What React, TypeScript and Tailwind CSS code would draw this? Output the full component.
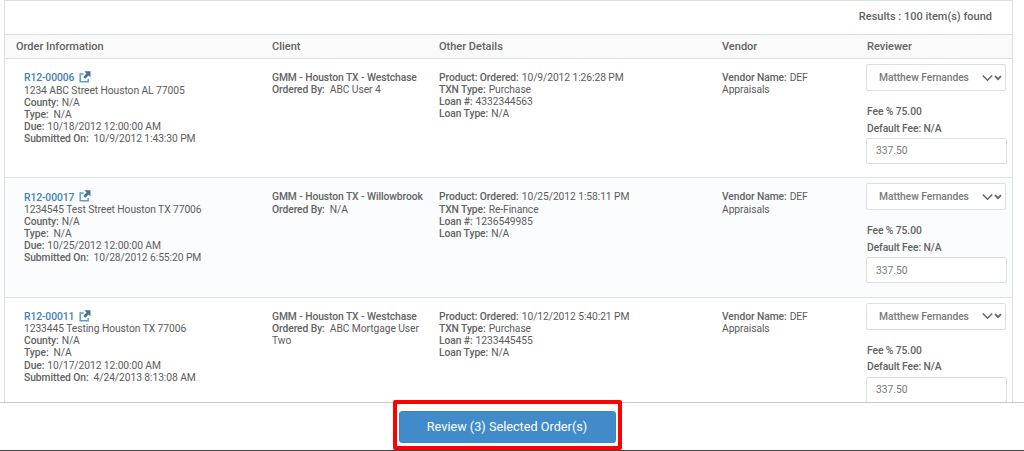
type Order = {
  id: string;
  address: string;
  due: string;
  submitted: string;
  client: string;
  orderedBy: string;
  ordered: string;
  txnType: string;
  loan: string;
};

const orders: Order[] = [
  {
    id: "R12-00006",
    address: "1234 ABC Street Houston AL 77005",
    due: "10/18/2012 12:00:00 AM",
    submitted: "10/9/2012 1:43:30 PM",
    client: "GMM - Houston TX - Westchase",
    orderedBy: "ABC User 4",
    ordered: "10/9/2012 1:26:28 PM",
    txnType: "Purchase",
    loan: "4332344563",
  },
  {
    id: "R12-00017",
    address: "1234545 Test Street Houston TX 77006",
    due: "10/25/2012 12:00:00 AM",
    submitted: "10/28/2012 6:55:20 PM",
    client: "GMM - Houston TX - Willowbrook",
    orderedBy: "N/A",
    ordered: "10/25/2012 1:58:11 PM",
    txnType: "Re-Finance",
    loan: "1236549985",
  },
  {
    id: "R12-00011",
    address: "1233445 Testing Houston TX 77006",
    due: "10/17/2012 12:00:00 AM",
    submitted: "4/24/2013 8:13:08 AM",
    client: "GMM - Houston TX - Westchase",
    orderedBy: "ABC Mortgage User\nTwo",
    ordered: "10/12/2012 5:40:21 PM",
    txnType: "Purchase",
    loan: "1233445455",
  },
];

function ExternalIcon() {
  return (
    <svg width="12" height="12" viewBox="0 0 12 12" fill="none" className="mb-[3px] ml-[5px] shrink-0">
      <path d="M4.6 3H1.2v7.8H9.2V8" stroke="#5f9dc2" strokeWidth="1.5" />
      <path d="M5.3 0.2H11.5V6.2L9.6 4.5L6.2 7.8L4.3 6L7.6 2.4Z" fill="#44728f" />
    </svg>
  );
}

// a long value carries its own line breaks, each extra line starts under the label
function Field({ label, value, wide }: { label: string; value: string; wide?: boolean }) {
  const [first, ...rest] = value.split("\n");

  return (
    <>
      <p className="whitespace-nowrap">
        <span className="font-medium text-[#626262]">{label}</span>
        <span className={wide ? "ml-[5px]" : "ml-[3px]"}>{first}</span>
      </p>
      {rest.map((line) => (
        <p key={line}>{line}</p>
      ))}
    </>
  );
}

function ReviewerSelect() {
  return (
    <div className="flex h-[27px] w-[140px] items-center rounded-[2px] border border-[#dcdfe0] bg-white pl-[12px] font-medium text-[#7a7a7a]">
      <span className="flex-1 pt-px whitespace-nowrap">Matthew Fernandes</span>
      <svg width="20" height="8" viewBox="0 0 20 8" fill="none" stroke="#666" className="mr-[3px]">
        <path d="M0.8 1.5L5.5 6.2L10.2 1.5" strokeWidth="1.5" />
        <path d="M13 2.2L16 5.2L19 2.2" strokeWidth="1.9" />
      </svg>
    </div>
  );
}

function OrderRow({ order }: { order: Order }) {
  return (
    <div className="grid h-[119.3px] shrink-0 grid-cols-[256px_167px_283px_145px_156px] border-b border-[#dfe3e3] text-[10.3px] leading-[12.1px] tracking-[-0.08px] even:bg-[#fbfcfe]">
      <div className="pt-[13.2px] pl-[19px]">
        <div className="flex h-[12.5px] items-center text-[#4080b3]">
          <span className="font-medium">{order.id}</span>
          <ExternalIcon />
        </div>
        <p>{order.address}</p>
        <Field label="County:" value="N/A" />
        <Field label="Type:" value="N/A" wide />
        <Field label="Due:" value={order.due} />
        <Field label="Submitted On:" value={order.submitted} wide />
      </div>
      <div className="pt-[13.2px] pl-[11px]">
        <p className="font-medium whitespace-nowrap text-[#626262]">{order.client}</p>
        <Field label="Ordered By:" value={order.orderedBy} wide />
      </div>
      <div className="pt-[13.2px] pl-[11px]">
        <Field label="Product: Ordered:" value={order.ordered} />
        <Field label="TXN Type:" value={order.txnType} />
        <Field label="Loan #:" value={order.loan} />
        <Field label="Loan Type:" value="N/A" />
      </div>
      <div className="pt-[13.2px] pl-[11px]">
        <Field label="Vendor Name:" value={"DEF\nAppraisals"} />
      </div>
      <div className="pt-[5px] pl-[10px]">
        <ReviewerSelect />
        <div className="mt-[13px] pl-px leading-[16.5px] font-medium text-[#626262]">
          <p>Fee % 75.00</p>
          <p>Default Fee: N/A</p>
        </div>
        <div className="mt-px flex h-[26px] w-[141px] items-center rounded-[2px] border border-[#dcdfe0] bg-white pt-px pl-[9px] tracking-normal text-[#777]">
          337.50
        </div>
      </div>
    </div>
  );
}

export default function App() {
  return (
    <div className="flex h-[451px] w-[1024px] flex-col overflow-hidden bg-white font-['Roboto',sans-serif] text-[#5c5c5c]">
      <div className="flex h-[402px] pl-[4px]">
        <div className="flex w-[1009px] flex-col overflow-hidden border-x border-t border-[#d9dede]">
          <div className="flex h-[33px] shrink-0 items-center justify-end pr-[20px] pb-px text-[11px] font-medium text-[#626262]">
            Results : 100 item(s) found
          </div>
          <div className="grid h-[25px] shrink-0 grid-cols-[256px_167px_283px_145px_156px] items-center border-y border-[#d9dede] bg-[#fafafa] pt-px text-[11px] font-medium text-[#626262] *:pl-[11px]">
            <span>Order Information</span>
            <span>Client</span>
            <span>Other Details</span>
            <span>Vendor</span>
            <span>Reviewer</span>
          </div>
          {orders.map((order) => (
            <OrderRow key={order.id} order={order} />
          ))}
        </div>
      </div>

      <div className="flex h-[49px] justify-center border-t border-b border-t-[#c9c9c9] border-b-[#444]">
        <div className="-mt-[3px] mr-[10px] flex h-[50px] w-[229px] shrink-0 items-center justify-center rounded-[2px] border-4 border-[#ff0000] bg-white pt-[3px]">
          <button className="h-[32px] w-[217px] rounded-[3px] border border-[#3d86c6] bg-[#428bca] text-[12.7px] text-white">
            Review (3) Selected Order(s)
          </button>
        </div>
      </div>
    </div>
  );
}
